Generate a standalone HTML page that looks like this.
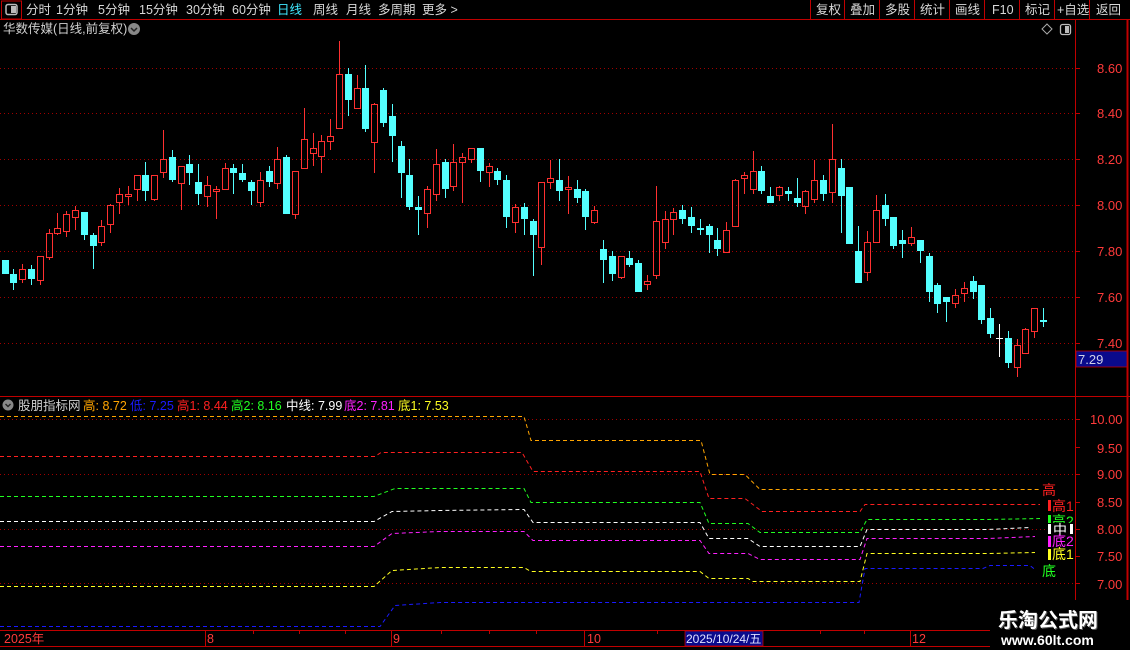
<!DOCTYPE html>
<html><head><meta charset="utf-8"><style>
html,body{margin:0;padding:0;background:#000;width:1130px;height:650px;overflow:hidden}
svg{display:block}
text{font-family:"Liberation Sans","Noto Sans CJK SC",sans-serif}
</style></head><body>
<svg id="s" width="1130" height="650" xmlns="http://www.w3.org/2000/svg">
<rect width="1130" height="650" fill="#000"/>
<g font-size="12.5" fill="#d8d8d8">
<rect x="1.5" y="1" width="20" height="18" fill="none" stroke="#c00000"/>
<rect x="6" y="4.5" width="11" height="10" rx="2" fill="none" stroke="#bbb" stroke-width="1.5"/>
<rect x="11" y="6" width="5" height="7" fill="#bbb"/>
<text x="26" y="14">分时</text><text x="56" y="14">1分钟</text><text x="98" y="14">5分钟</text><text x="139" y="14">15分钟</text><text x="186" y="14">30分钟</text><text x="232" y="14">60分钟</text>
<text x="277" y="14" fill="#40e8ff">日线</text><text x="313" y="14">周线</text><text x="346" y="14">月线</text><text x="378" y="14">多周期</text><text x="422" y="14">更多 &gt;</text>
<text x="816" y="14">复权</text><text x="850" y="14">叠加</text><text x="885" y="14">多股</text><text x="920" y="14">统计</text><text x="955" y="14">画线</text><text x="992" y="14">F10</text><text x="1025" y="14">标记</text><text x="1057" y="14">+自选</text><text x="1096" y="14">返回</text>
</g>
<g stroke="#c00000" fill="none">
<line x1="0" y1="19.5" x2="1130" y2="19.5"/>
<line x1="810.5" y1="0" x2="810.5" y2="19"/><line x1="844.5" y1="0" x2="844.5" y2="19"/><line x1="879.5" y1="0" x2="879.5" y2="19"/><line x1="914.5" y1="0" x2="914.5" y2="19"/><line x1="949.5" y1="0" x2="949.5" y2="19"/><line x1="984.5" y1="0" x2="984.5" y2="19"/><line x1="1019.5" y1="0" x2="1019.5" y2="19"/><line x1="1054.5" y1="0" x2="1054.5" y2="19"/><line x1="1089.5" y1="0" x2="1089.5" y2="19"/>
<line x1="1075.5" y1="19" x2="1075.5" y2="646"/>
<line x1="1127.5" y1="19" x2="1127.5" y2="646" stroke-width="2"/>
<line x1="0" y1="396.5" x2="1130" y2="396.5"/>
<line x1="0" y1="630.5" x2="1130" y2="630.5"/>
<line x1="0" y1="646.5" x2="1130" y2="646.5"/>
</g>
<text x="3" y="33" font-size="12.5" fill="#d0d0d0">华数传媒(日线,前复权)</text>
<circle cx="134" cy="29" r="6" fill="#888"/><path d="M131 28l3 3 3-3" stroke="#222" stroke-width="1.5" fill="none"/>
<path d="M1047 24l5 5-5 5-5-5z" fill="none" stroke="#aaa"/>
<rect x="1060.5" y="24.5" width="10" height="10" rx="2" fill="none" stroke="#bbb" stroke-width="1.3"/><rect x="1065" y="26" width="4" height="7" fill="#bbb"/>
<g stroke="#a00000" stroke-dasharray="1,3">
<line x1="0" y1="68.5" x2="1075" y2="68.5"/><line x1="0" y1="113.5" x2="1075" y2="113.5"/><line x1="0" y1="159.5" x2="1075" y2="159.5"/><line x1="0" y1="205.5" x2="1075" y2="205.5"/><line x1="0" y1="251.5" x2="1075" y2="251.5"/><line x1="0" y1="297.5" x2="1075" y2="297.5"/><line x1="0" y1="343.5" x2="1075" y2="343.5"/>
<line x1="0" y1="419.5" x2="1075" y2="419.5"/><line x1="0" y1="474.5" x2="1075" y2="474.5"/><line x1="0" y1="529.5" x2="1075" y2="529.5"/><line x1="0" y1="583.5" x2="1075" y2="583.5"/>
</g>
<g font-size="13" fill="#ff3a3a">
<text x="1097" y="73">8.60</text><text x="1097" y="118">8.40</text><text x="1097" y="164">8.20</text><text x="1097" y="210">8.00</text><text x="1097" y="256">7.80</text><text x="1097" y="302">7.60</text><text x="1097" y="348">7.40</text>
<text x="1090" y="424">10.00</text><text x="1097" y="453">9.50</text><text x="1097" y="479">9.00</text><text x="1097" y="507">8.50</text><text x="1097" y="534">8.00</text><text x="1097" y="561">7.50</text><text x="1097" y="589">7.00</text>
</g>
<g stroke="#c00000">
<line x1="1076" y1="68.5" x2="1080" y2="68.5"/><line x1="1076" y1="113.5" x2="1080" y2="113.5"/><line x1="1076" y1="159.5" x2="1080" y2="159.5"/><line x1="1076" y1="205.5" x2="1080" y2="205.5"/><line x1="1076" y1="251.5" x2="1080" y2="251.5"/><line x1="1076" y1="297.5" x2="1080" y2="297.5"/><line x1="1076" y1="343.5" x2="1080" y2="343.5"/>
<line x1="1076" y1="419.5" x2="1080" y2="419.5"/><line x1="1076" y1="447.5" x2="1080" y2="447.5"/><line x1="1076" y1="474.5" x2="1080" y2="474.5"/><line x1="1076" y1="502.5" x2="1080" y2="502.5"/><line x1="1076" y1="529.5" x2="1080" y2="529.5"/><line x1="1076" y1="556.5" x2="1080" y2="556.5"/><line x1="1076" y1="583.5" x2="1080" y2="583.5"/>
</g>
<rect x="1076" y="351" width="51" height="16" fill="#0a0a8c" stroke="#c00000" stroke-width="0.8"/>
<text x="1078" y="364" font-size="13" fill="#d0d0e8">7.29</text>
<g id="candles"></g>
<circle cx="8" cy="405" r="5.5" fill="#888"/><path d="M5.5 404l2.5 2.5 2.5-2.5" stroke="#222" stroke-width="1.4" fill="none"/>
<g font-size="12.5">
<text x="18" y="410" fill="#d0d0d0">股朋指标网</text>
<text x="83" y="410" fill="#ffa500">高: 8.72</text>
<text x="130" y="410" fill="#1a1aff">低: 7.25</text>
<text x="177" y="410" fill="#ff2020">高1: 8.44</text>
<text x="231" y="410" fill="#20ff20">高2: 8.16</text>
<text x="286" y="410" fill="#ffffff">中线: 7.99</text>
<text x="344" y="410" fill="#ff20ff">底2: 7.81</text>
<text x="398" y="410" fill="#ffff20">底1: 7.53</text>
</g>
<g fill="none" stroke-width="1" stroke-dasharray="4,3">
<polyline stroke="#ffa500" points="0,416.5 524,416.5 531,440.5 701,440.5 710,474.5 745,474.5 760,489.5 1040,489.5"/>
<polyline stroke="#ff2020" points="0,456.5 375,456.5 381,452.5 522,452.5 533,471.5 700,471.5 709,498.5 745,498.5 762,511.5 860,511.5 865,504.5 1040,504.5"/>
<polyline stroke="#20ff20" points="0,496.5 374,496.5 395,488.5 524,488.5 531,502.5 700,502.5 709,523.5 748,523.5 760,532.5 860,532.5 867,519.5 988,519.5 1040,518.5"/>
<polyline stroke="#ffffff" points="0,521.5 374,521.5 392,511.5 440,510.5 524,509.5 533,522.5 700,522.5 709,538.5 748,538.5 760,546.5 860,546.5 867,529.5 988,529.5 1030,527.5"/>
<polyline stroke="#ff20ff" points="0,546.5 374,546.5 392,533.5 440,531.5 524,531.5 533,540.5 700,540.5 709,553.5 748,553.5 760,559.5 860,559.5 867,538.5 988,538.5 1035,536.5"/>
<polyline stroke="#ffff20" points="0,586.5 374,586.5 392,570.5 440,567.5 524,567.5 531,571.5 700,571.5 709,578.5 748,578.5 753,581.5 860,581.5 867,553.5 988,553.5 1035,552.5"/>
<polyline stroke="#1a1aff" points="0,626.5 380,626.5 395,605.5 440,602.5 859,602.5 865,568.5 983,568.5 990,565.5 1030,565.5 1035,569.5"/>
</g>
<g font-size="14">
<text x="1042" y="495" fill="#ff2020">高</text>
<rect x="1048" y="500" width="3" height="11" fill="#ff2020"/><text x="1052" y="511" fill="#ff2020">高1</text>
<rect x="1048" y="515" width="3" height="11" fill="#20ff20"/><text x="1052" y="526" fill="#20ff20">高2</text>
<rect x="1048" y="523" width="27" height="12" fill="#000"/><rect x="1048" y="524" width="3" height="10" fill="#fff"/><rect x="1070" y="524" width="3" height="10" fill="#fff"/><text x="1053" y="535" fill="#ffffff">中</text>
<rect x="1048" y="536" width="3" height="11" fill="#ff20ff"/><text x="1052" y="546" fill="#ff20ff">底2</text>
<rect x="1048" y="549" width="3" height="11" fill="#ffff20"/><text x="1052" y="559" fill="#ffff20">底1</text>
<text x="1042" y="576" fill="#20ff20">底</text>
</g>
<g stroke="#c00000">
<line x1="205.5" y1="631" x2="205.5" y2="646"/><line x1="391.5" y1="631" x2="391.5" y2="646"/><line x1="584.5" y1="631" x2="584.5" y2="646"/><line x1="910.5" y1="631" x2="910.5" y2="646"/>
<line x1="253.5" y1="631" x2="253.5" y2="634"/><line x1="299.5" y1="631" x2="299.5" y2="634"/><line x1="345.5" y1="631" x2="345.5" y2="634"/><line x1="441.5" y1="631" x2="441.5" y2="634"/><line x1="489.5" y1="631" x2="489.5" y2="634"/><line x1="536.5" y1="631" x2="536.5" y2="634"/><line x1="657.5" y1="631" x2="657.5" y2="634"/><line x1="820.5" y1="631" x2="820.5" y2="634"/><line x1="864.5" y1="631" x2="864.5" y2="634"/>
</g>
<g font-size="12.5" fill="#ff3a3a">
<text x="4" y="643">2025年</text><text x="207" y="643">8</text><text x="393" y="643">9</text><text x="587" y="643">10</text><text x="912" y="643">12</text>
</g>
<rect x="685" y="631" width="78" height="15" fill="#0a0a8c" stroke="#c00000" stroke-width="0.8"/>
<text x="686" y="643" font-size="12" fill="#e0e0ff">2025/10/24/五</text>
<rect x="990" y="600" width="140" height="50" fill="#000"/>
<g font-weight="bold" fill="#fff">
<text x="999" y="628" font-size="20" font-family="'Noto Serif CJK SC','Noto Sans CJK SC',serif" fill="#555">乐淘公式网</text>
<text x="998" y="627" font-size="20" font-family="'Noto Serif CJK SC','Noto Sans CJK SC',serif">乐淘公式网</text>
<text x="1001" y="645" font-size="14" font-family="'Liberation Serif',serif">www.60lt.com</text>
</g>
</svg>
<script>
var D=[
[297,260,274,297,'c'],[269,274,283,290,'c'],[264,269,279,283,'r'],[265,269,279,285,'c'],[256,256,280,285,'r'],
[229,233,257,260,'r'],[213,228,233,235,'r'],[211,214,231,237,'r'],[206,210,217,230,'r'],[212,212,235,240,'c'],
[233,235,246,269,'c'],[220,226,242,246,'r'],[204,205,224,233,'r'],[188,194,202,214,'r'],[186,194,196,205,'r'],
[175,175,189,201,'r'],[162,175,191,201,'c'],[175,175,199,201,'r'],[130,159,172,178,'r'],[150,157,180,182,'c'],
[166,166,183,210,'r'],[155,164,173,185,'c'],[164,182,194,205,'c'],[176,185,196,207,'r'],[186,189,191,219,'r'],
[163,168,189,189,'r'],[164,168,173,194,'c'],[164,173,180,182,'c'],[180,182,191,205,'c'],[172,180,202,207,'r'],
[166,171,182,187,'c'],[147,159,183,189,'r'],[155,157,214,214,'c'],[171,171,214,219,'r'],[108,139,168,168,'r'],
[133,148,153,166,'r'],[135,141,156,173,'r'],[119,136,141,150,'r'],[41,74,128,128,'r'],[68,74,100,116,'c'],
[75,88,108,108,'r'],[65,88,129,132,'c'],[103,104,142,173,'r'],[88,90,123,127,'c'],[104,116,136,162,'c'],
[141,146,173,198,'c'],[159,175,207,210,'c'],[196,207,210,235,'c'],[186,189,213,228,'r'],[149,164,194,201,'r'],
[159,162,189,198,'c'],[144,162,186,191,'r'],[153,157,162,203,'r'],[148,148,159,163,'r'],[148,148,171,182,'c'],
[163,166,172,187,'r'],[168,171,180,185,'c'],[175,180,217,228,'c'],[204,207,222,233,'r'],[203,207,219,235,'c'],
[219,221,235,276,'c'],[182,182,247,265,'r'],[160,178,182,189,'r'],[159,180,191,201,'c'],[176,187,189,214,'r'],
[180,189,198,203,'c'],[189,191,217,230,'c'],[206,210,222,224,'r'],[240,249,260,283,'c'],[251,256,274,281,'c'],
[256,256,277,279,'r'],[251,258,265,267,'c'],[260,263,292,292,'c'],[275,281,284,290,'r'],[186,221,275,279,'r'],
[211,219,242,249,'r'],[208,212,219,235,'r'],[205,210,219,224,'c'],[207,217,226,233,'c'],[219,228,230,235,'c'],
[224,226,235,253,'c'],[228,240,249,256,'c'],[222,230,252,253,'r'],[179,180,226,226,'r'],[172,175,178,194,'r'],
[151,171,189,194,'r'],[166,171,191,194,'c'],[187,196,203,203,'c'],[186,187,195,201,'r'],[187,191,194,201,'c'],
[178,198,203,207,'c'],[190,191,206,214,'r'],[160,180,199,203,'r'],[175,180,194,201,'c'],[124,159,192,203,'r'],
[159,168,196,233,'c'],[187,187,244,244,'c'],[226,251,283,283,'c'],[231,242,272,281,'r'],[195,210,242,242,'r'],
[194,205,219,226,'c'],[217,217,246,249,'c'],[230,240,244,258,'c'],[227,237,243,246,'r'],[240,240,251,263,'c'],
[253,256,292,302,'c'],[283,285,304,313,'c'],[297,297,302,322,'c'],[289,295,303,308,'r'],[282,288,293,302,'r'],
[276,281,292,299,'c'],[285,285,320,324,'c'],[308,318,334,338,'c'],[324,338,338,357,'w'],[331,338,363,368,'c'],
[339,345,367,377,'r'],[328,329,353,354,'r'],[308,308,331,338,'r'],[308,320,322,327,'c']];
var NS='http://www.w3.org/2000/svg';
var g=document.getElementById('candles');
function el(n,a){var e=document.createElementNS(NS,n);for(var k in a)e.setAttribute(k,a[k]);g.appendChild(e);}
for(var i=0;i<D.length;i++){
 var d=D[i],x=Math.round(4.5+8.8*i),col=d[4]=='r'?'#ff3030':(d[4]=='w'?'#ffffff':'#54ffff');
 var t=d[1],b=d[2];if(b-t<1)b=t+1;
 if(d[4]=='r'){
  el('line',{x1:x+.5,y1:d[0],x2:x+.5,y2:t,stroke:col});
  el('line',{x1:x+.5,y1:b,x2:x+.5,y2:d[3],stroke:col});
  el('rect',{x:x-2.5,y:t+.5,width:6,height:b-t,fill:'none',stroke:col});
 } else if(d[4]=='w'){
  el('line',{x1:x+.5,y1:d[0],x2:x+.5,y2:d[3],stroke:col});
  el('rect',{x:x-3,y:t,width:7,height:1,fill:col});
 } else {
  el('line',{x1:x+.5,y1:d[0],x2:x+.5,y2:d[3],stroke:col});
  el('rect',{x:x-3,y:t,width:7,height:Math.max(2,b-t),fill:col});
 }
}
</script>
</body></html>
